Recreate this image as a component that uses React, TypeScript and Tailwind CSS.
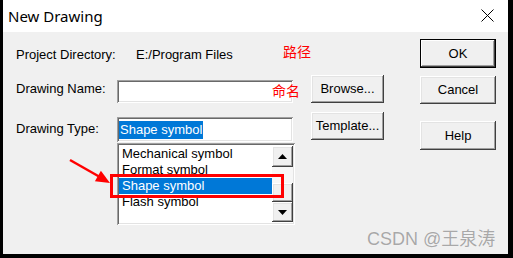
import React from "react";

const raised =
  "shadow-[inset_-1px_-1px_#404040,inset_1px_1px_#ffffff,inset_-2px_-2px_#a0a0a0,inset_2px_2px_#e3e3e3]";
const sunken =
  "shadow-[inset_1px_1px_#a0a0a0,inset_-1px_-1px_#ffffff,inset_2px_2px_#696969,inset_-2px_-2px_#e3e3e3]";

function Btn({ label, cls, def }: { label: string; cls: string; def?: boolean }) {
  return (
    <div
      className={`flex items-center justify-center bg-[#f0f0f0] text-[13px] text-black ${cls} ${
        def
          ? "shadow-[inset_0_0_0_1px_#000000,inset_-2px_-2px_#404040,inset_2px_2px_#ffffff,inset_-3px_-3px_#a0a0a0]"
          : raised
      }`}
    >
      {label}
    </div>
  );
}

export default function App() {
  const font = { fontFamily: '"Liberation Sans", Arial, sans-serif' };
  return (
    <div className="relative w-[513px] h-[258px] bg-black pl-[3px] pr-[5px] pb-[4px] overflow-hidden" style={font}>
      <div className="flex flex-col w-full h-full bg-[#f0f0f0]">
        {/* Title bar */}
        <div className="h-[32px] bg-white flex items-center justify-between pl-[5px] pr-[14px] shrink-0">
          <span className="text-[15px] text-black" style={{ fontFamily: '"Noto Sans", "Open Sans", sans-serif' }}>
            New Drawing
          </span>
          <svg width="13" height="13" viewBox="0 0 13 13" className="mb-[1px]">
            <path d="M0.5 0.5 L12.5 12.5 M12.5 0.5 L0.5 12.5" stroke="#000" strokeWidth="1" />
          </svg>
        </div>
        {/* Body */}
        <div className="flex flex-row flex-1">
          {/* left */}
          <div className="flex flex-col pl-[13px]">
            <div className="mt-[14px] h-[18px] flex items-center text-[13px] text-black">
              <span className="w-[120px]">Project Directory:</span>
              <span>E:/Program Files</span>
            </div>
            <div className="mt-[11px] flex flex-row items-start">
              <span className="w-[101px] mt-[6px] leading-[15px] text-[13px] text-black">Drawing Name:</span>
              <div className={`mt-[5px] h-[23px] w-[176px] bg-white ${sunken}`} />
              <Btn label="Browse..." cls="ml-[18px] h-[28px] w-[73px]" />
            </div>
            <div className="mt-[9px] flex flex-row items-start">
              <span className="w-[101px] mt-[9px] leading-[15px] text-[13px] text-black">Drawing Type:</span>
              <div className={`mt-[5px] h-[25px] w-[176px] bg-white ${sunken} flex items-center pl-[2px]`}>
                <span className="bg-[#0078d7] text-white text-[13px] leading-[18px] px-[1px]">Shape symbol</span>
              </div>
              <Btn label="Template..." cls="ml-[18px] h-[28px] w-[73px]" />
            </div>
            <div className={`mt-[1px] ml-[101px] w-[178px] h-[82px] bg-white ${sunken} p-[2px] flex flex-row`}>
              <div className="flex-1 flex flex-col pt-[1px] text-[13px] text-black leading-[16px]">
                <div className="pl-[3px]">Mechanical symbol</div>
                <div className="pl-[3px]">Format symbol</div>
                <div className="pl-[3px] bg-[#0078d7] text-white">Shape symbol</div>
                <div className="pl-[3px]">Flash symbol</div>
              </div>
              <div className="w-[21px] flex flex-col pt-[1px] pb-[1px]">
                <div className={`h-[21px] bg-[#f0f0f0] ${raised} flex items-center justify-center`}>
                  <svg width="9" height="5" viewBox="0 0 9 5"><path d="M4.5 0 L9 5 L0 5 Z" fill="#000" /></svg>
                </div>
                <div className="h-[16px] bg-[#f7f7f7]" />
                <div className={`h-[20px] bg-[#f0f0f0] ${raised}`} />
                <div className={`h-[20px] bg-[#f0f0f0] ${raised} flex items-center justify-center`}>
                  <svg width="9" height="5" viewBox="0 0 9 5"><path d="M0 0 L9 0 L4.5 5 Z" fill="#000" /></svg>
                </div>
              </div>
            </div>
          </div>
          {/* right */}
          <div className="flex flex-col ml-[36px] mt-[7px]">
            <Btn label="OK" cls="h-[29px] w-[76px]" def />
            <Btn label="Cancel" cls="mt-[8px] h-[28px] w-[76px]" />
            <Btn label="Help" cls="mt-[17px] h-[29px] w-[76px]" />
          </div>
        </div>
      </div>

      {/* annotations */}
      <span
        className="absolute left-[283px] top-[43px] text-[14px] leading-[16px] text-[#ff0000]"
        style={{ fontFamily: '"Noto Sans CJK SC", sans-serif' }}
      >
        路径
      </span>
      <span
        className="absolute left-[272px] top-[82px] text-[14px] leading-[16px] text-[#ff0000]"
        style={{ fontFamily: '"Noto Sans CJK SC", sans-serif' }}
      >
        命名
      </span>
      <div className="absolute left-[110px] top-[174px] w-[174px] h-[24px] border-[3px] border-[#ff0000]" />
      <svg className="absolute left-0 top-0 pointer-events-none" width="513" height="258">
        <line x1="70" y1="160" x2="99" y2="176.5" stroke="#ff0000" strokeWidth="2.5" />
        <polygon points="110,183 94.9,181.2 100.9,170.8" fill="#ff0000" />
      </svg>
      <span
        className="absolute left-[367px] top-[228px] text-[18px] leading-[22px] text-[#a8a8a8]"
        style={{ fontFamily: '"Liberation Sans", "Noto Sans CJK SC", sans-serif', textShadow: "0 0 1px #ffffff" }}
      >
        CSDN @王泉涛
      </span>
    </div>
  );
}
